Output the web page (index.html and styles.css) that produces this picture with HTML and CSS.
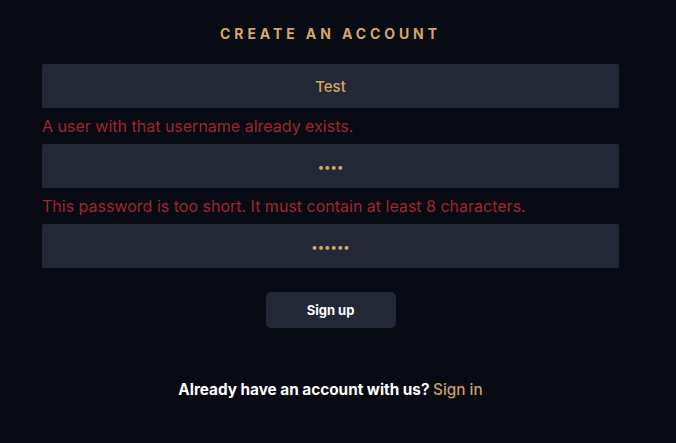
FILE: index.html
```html
<!DOCTYPE html>
<html>
<head>
<meta charset="utf-8">
<link rel="stylesheet" href="styles.css">
</head>
<body>
<div class="wrap">
  <h1 class="title">CREATE AN ACCOUNT</h1>
  <form class="form">
    <input class="field" type="text" value="Test">
    <p class="error">A user with that username already exists.</p>
    <input class="field field-secret" type="password" value="abcd">
    <p class="error">This password is too short. It must contain at least 8 characters.</p>
    <input class="field field-secret" type="password" value="abcdef">
    <div class="actions"><button class="btn" type="button">Sign up</button></div>
  </form>
  <p class="footer">Already have an account with us? <a class="link" href="#">Sign in</a></p>
</div>
</body>
</html>
```
FILE: styles.css
```css
html, body {
  margin: 0;
  padding: 0;
  background: #080a14;
  font-family: Inter, "DejaVu Sans", sans-serif;
}
.wrap {
  width: 577px;
  margin-left: 42px;
  padding-top: 25px;
}
.title {
  margin: 0;
  text-align: center;
  color: #d3a866;
  font-size: 14px;
  font-weight: 700;
  letter-spacing: 3.9px;
  line-height: 18px;
}
.form {
  margin-top: 21px;
  display: flex;
  flex-direction: column;
}
.field {
  box-sizing: border-box;
  width: 100%;
  height: 44px;
  border: none;
  border-radius: 2px;
  background: #222836;
  color: #d3a866;
  text-align: center;
  font-family: Inter, "DejaVu Sans", sans-serif;
  font-size: 15px;
  font-weight: 500;
  outline: none;
  padding: 0 12px;
}
.field-secret {
  font-size: 12px;
  padding-top: 0;
}
.error {
  margin: 0;
  padding: 8px 0;
  height: 20px;
  line-height: 20px;
  color: #a0252a;
  font-size: 16px;
}
.actions {
  display: flex;
  justify-content: center;
  margin-top: 24px;
}
.btn {
  width: 130px;
  height: 36px;
  border: none;
  border-radius: 5px;
  background: #222836;
  color: #ffffff;
  font-family: Inter, "DejaVu Sans", sans-serif;
  font-size: 13px;
  font-weight: 700;
}
.footer {
  margin: 52px 0 0;
  text-align: center;
  color: #ffffff;
  font-size: 15.3px;
  font-weight: 700;
  line-height: 20px;
}
.link {
  color: #c9a066;
  font-weight: 500;
  text-decoration: none;
}
```
